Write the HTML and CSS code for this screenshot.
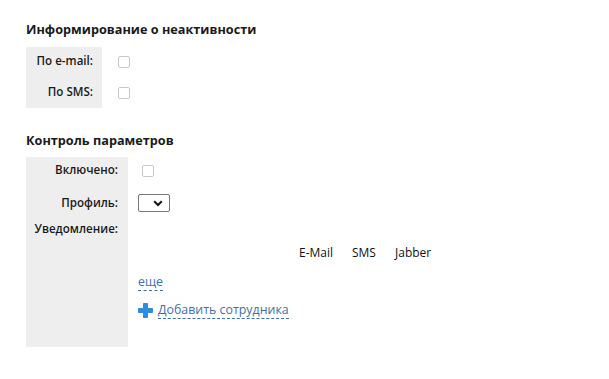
FILE: index.html
```html
<!DOCTYPE html>
<html lang="ru">
<head>
<meta charset="utf-8">
<link rel="stylesheet" href="styles.css">
</head>
<body>
<div class="page">
  <h2 class="title t1">Информирование о неактивности</h2>
  <div class="form f1">
    <div class="lbl r1">По e-mail:</div>
    <div class="val r1"><span class="cb"></span></div>
    <div class="lbl r2">По SMS:</div>
    <div class="val r2"><span class="cb"></span></div>
  </div>

  <h2 class="title t2">Контроль параметров</h2>
  <div class="form f2">
    <div class="lbl s1">Включено:</div>
    <div class="val s1"><span class="cb cb2"></span></div>
    <div class="lbl s2">Профиль:</div>
    <div class="val s2"><span class="select"><svg width="10" height="7" viewBox="0 0 10 7"><path d="M1.2 1.3 L5 5 L8.8 1.3" fill="none" stroke="#111" stroke-width="2"/></svg></span></div>
    <div class="lbl s3">Уведомление:</div>
    <div class="val s3">
      <div class="heads"><span class="h-mail">E-Mail</span><span class="h-sms">SMS</span><span class="h-jab">Jabber</span></div>
      <div class="more"><a class="dash">еще</a></div>
      <div class="add"><svg class="plus" width="15" height="15" viewBox="0 0 15 15"><path d="M5.5 0.5h4v5h5v4h-5v5h-4v-5h-5v-4h5z" fill="#2e8ce0" stroke="#2e8ce0" stroke-width="1" stroke-linejoin="round"/></svg><a class="dash">Добавить сотрудника</a></div>
    </div>
  </div>
</div>
</body>
</html>
```
FILE: styles.css
```css
html, body { margin: 0; padding: 0; background: #fff; }
body { font-family: "Open Sans", "Liberation Sans", sans-serif; font-size: 12px; color: #111; }
.page { padding: 20px 0 0 26px; }
.title { margin: 0; font-size: 12.7px; font-weight: 700; line-height: 18px; color: #1a1a1a; }
.t2 { margin-top: 23px; }
.form { display: grid; margin-top: 9px; }
.f1 { grid-template-columns: 76px auto; }
.f2 { grid-template-columns: 102px auto; margin-top: 8px; }
.lbl { background: #eeeeee; text-align: right; line-height: 16px; font-weight: 600; font-size: 11.6px; color: #1a1a1a; }
.f1 .lbl { padding-right: 9px; }
.f2 .lbl { padding-right: 10px; }
.val { display: flex; align-items: flex-start; }
.f1 .val { padding-left: 16px; }
.f2 .val { padding-left: 10px; }
.r1 { height: 31px; padding-top: 6px; box-sizing: border-box; }
.r2 { height: 30px; padding-top: 6px; box-sizing: border-box; }
.s1 { height: 30px; padding-top: 5px; box-sizing: border-box; }
.s2 { height: 32px; padding-top: 8px; box-sizing: border-box; }
.s3 { height: 128px; padding-top: 2px; box-sizing: border-box; }
.val.s1, .val.s2, .val.s3 { padding-top: 0; }
.val.s1 { padding-top: 8px; }
.val.s2 { padding-top: 7px; }
.val.s3 { flex-direction: column; padding-top: 26px; }
.cb { display: inline-block; width: 10px; height: 10px; border: 1px solid #c9c9c9; border-radius: 2px; background: #fff; margin-top: 3px; }
.cb2 { margin-left: 4px; margin-top: 0; }
.select { display: inline-flex; align-items: center; justify-content: flex-end; box-sizing: border-box; width: 32px; height: 18px; border: 1px solid #777; border-radius: 2px; padding-right: 6px; }
.heads { display: flex; line-height: 16px; padding-left: 161px; }
.h-mail { width: 53px; }
.h-sms { width: 43px; }
.more { margin-top: 13px; line-height: 16px; font-size: 12.4px; }
.dash { color: #3f6fa6; text-decoration: none; border-bottom: 1px dashed #3f6fa6; line-height: 16px; display: inline-block; }
.add { display: flex; align-items: center; margin-top: 11px; font-size: 12.4px; }
.plus { margin-right: 5px; }
```
